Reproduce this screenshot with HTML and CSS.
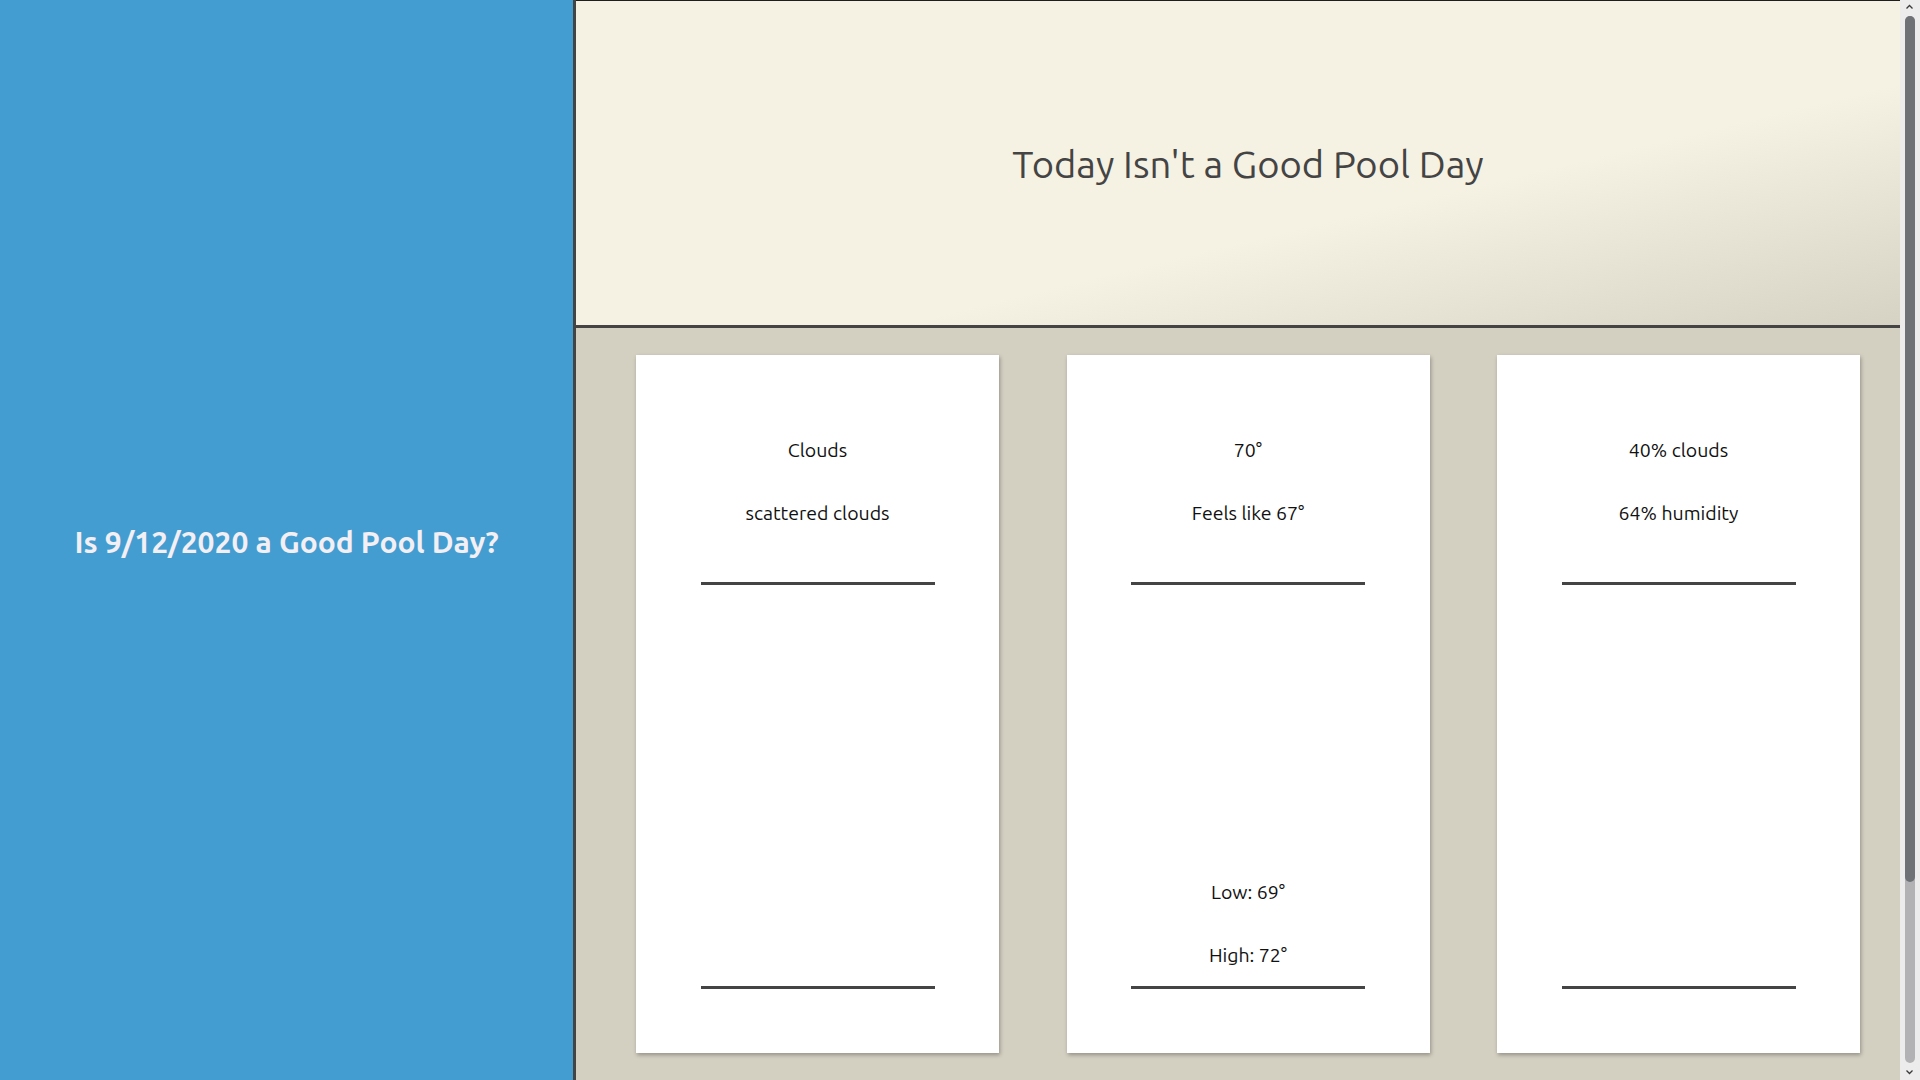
FILE: index.html
```html
<!DOCTYPE html>
<html lang="en">
<head>
<meta charset="utf-8">
<title>Pool Day</title>
<link rel="stylesheet" href="styles.css">
</head>
<body>
<div class="page">
  <aside class="sidebar">
    <h1 class="sidebar-title">Is 9/12/2020 a Good Pool Day?</h1>
  </aside>
  <main class="main">
    <header class="hero">
      <h2 class="hero-title">Today Isn't a Good Pool Day</h2>
    </header>
    <section class="cards">
      <article class="card">
        <div class="card-top">
          <p class="row">Clouds</p>
          <p class="row">scattered clouds</p>
          <div class="rule rule-top"></div>
        </div>
        <div class="card-bottom">
          <div class="rule"></div>
        </div>
      </article>
      <article class="card">
        <div class="card-top">
          <p class="row">70°</p>
          <p class="row">Feels like 67°</p>
          <div class="rule rule-top"></div>
        </div>
        <div class="card-bottom">
          <p class="row">Low: 69°</p>
          <p class="row">High: 72°</p>
          <div class="rule rule-bottom"></div>
        </div>
      </article>
      <article class="card">
        <div class="card-top">
          <p class="row">40% clouds</p>
          <p class="row">64% humidity</p>
          <div class="rule rule-top"></div>
        </div>
        <div class="card-bottom">
          <div class="rule"></div>
        </div>
      </article>
    </section>
  </main>
</div>
<div class="scrollbar" aria-hidden="true">
  <svg class="sb-arrow" width="20" height="15" viewBox="0 0 20 15"><path d="M6.5 8.5 L9.5 5.5 L12.5 8.5" fill="none" stroke="#3a3a3a" stroke-width="1.3"/></svg>
  <div class="sb-track"><div class="sb-thumb"></div></div>
  <svg class="sb-arrow" width="20" height="15" viewBox="0 0 20 15"><path d="M6.5 5.5 L9.5 8.5 L12.5 5.5" fill="none" stroke="#3a3a3a" stroke-width="1.3"/></svg>
</div>
</body>
</html>
```
FILE: styles.css
```css
html {
  overflow-x: hidden;
  scrollbar-width: none;
}

html::-webkit-scrollbar {
  display: none;
}

body {
  margin: 0;
  background: #d3cfc1;
  font-family: Ubuntu, Lato, "Open Sans", sans-serif;
  overflow-x: hidden;
}

.page {
  display: flex;
  width: 100vw;
}

.sidebar {
  flex: 0 0 573px;
  align-self: flex-start;
  position: sticky;
  top: 0;
  height: 100vh;
  background: #439dd1;
  border-right: 3px solid #444;
  display: flex;
  align-items: center;
  justify-content: center;
}

.sidebar-title {
  margin: 0 0 -4px;
  font-size: 30px;
  font-weight: 700;
  color: #f3eff3;
}

.main {
  flex: 0 0 calc(100vw - 576px);
  min-height: 1306px;
}

.hero {
  height: 324px;
  border-top: 1px solid #1e1e1e;
  border-bottom: 3px solid #444;
  display: flex;
  align-items: center;
  justify-content: center;
  background: linear-gradient(to bottom right, #f5f1e3 62%, #d5d1c3 100%);
}

.hero-title {
  margin: 0;
  font-size: 38.2px;
  font-weight: 400;
  color: #444;
}

.cards {
  display: flex;
  justify-content: space-between;
  padding: 27px 60px 253px;
}

.card {
  width: 363px;
  height: 698px;
  background: #fff;
  box-shadow: 1px 2px 4px rgba(0, 0, 0, 0.3);
  display: flex;
  flex-direction: column;
  justify-content: space-between;
  align-items: center;
  padding-bottom: 64px;
  box-sizing: border-box;
}

.card-top,
.card-bottom {
  display: flex;
  flex-direction: column;
  align-items: center;
}

.card-top {
  padding-top: 83px;
}

.row {
  margin: 0;
  font-size: 19.5px;
  line-height: 24px;
  color: #111;
}

.row + .row {
  margin-top: 38.5px;
}

.rule {
  width: 234px;
  height: 3px;
  background: #444;
}

.rule-top {
  margin-top: 57.5px;
}

.rule-bottom {
  margin-top: 19.5px;
}

.scrollbar {
  position: fixed;
  top: 0;
  right: 0;
  width: 20px;
  height: 100vh;
  background: #ececec;
  display: flex;
  flex-direction: column;
  align-items: center;
}

.sb-arrow {
  flex: 0 0 15px;
  display: block;
}

.sb-track {
  flex: 1;
  width: 10px;
  margin: 1px 0 2px;
  border-radius: 5px;
  background: #b2b2b4;
  display: flex;
  flex-direction: column;
}

.sb-thumb {
  height: 866px;
  border-radius: 5px;
  background: #6e7176;
}
```
